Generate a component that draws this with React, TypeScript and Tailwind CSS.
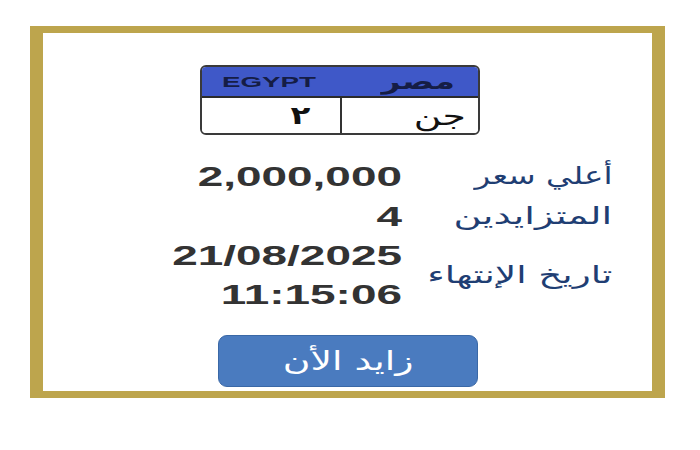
import React from "react";

const latin = { fontFamily: '"Liberation Sans", Arial, sans-serif' };
const arabic = { fontFamily: '"DejaVu Sans", "Noto Sans", sans-serif' };

function Plate() {
  return (
    <div className="ml-[157px] flex h-[70px] w-[280px] shrink-0 flex-col overflow-hidden rounded-[6px] border-2 border-[#3a3a3a]">
      <div className="flex h-[31px] shrink-0 items-center justify-between border-b-2 border-[#2b2b2b] bg-[#3f58c8] pl-[20px] pr-[23px]">
        <span style={latin} className="block origin-left scale-x-[1.85] text-[15px] font-bold leading-[15px] text-[#151d45]">
          EGYPT
        </span>
        <span dir="rtl" style={arabic} className="block origin-right scale-x-[1.5] text-[22px] font-bold leading-[22px] text-[#151d45]">
          مصر
        </span>
      </div>
      <div className="flex flex-1 bg-white">
        <div className="flex w-[140px] items-center justify-end border-r-2 border-[#333] pr-[30px]">
          <span style={arabic} className="block origin-right scale-x-[1.3] text-[25px] font-bold leading-[25px] text-[#111]">
            ٢
          </span>
        </div>
        <div className="flex flex-1 items-center justify-end pr-[12px]">
          <span dir="rtl" style={arabic} className="block origin-right scale-x-[1.45] text-[26px] leading-[26px] text-[#111]">
            جن
          </span>
        </div>
      </div>
    </div>
  );
}

function Label({ children, tall, scale }: { children: React.ReactNode; tall?: boolean; scale: string }) {
  return (
    <div className={`flex items-center ${tall ? "h-[78px]" : "h-[40px]"}`}>
      <span style={arabic} className={`block origin-right text-[24px] leading-[30px] text-[#1f3e73] ${scale}`}>
        {children}
      </span>
    </div>
  );
}

function Value({ lines }: { lines: string[] }) {
  return (
    <div
      dir="ltr"
      style={latin}
      className="origin-right scale-x-[1.64] text-right text-[28px] font-bold leading-[39px] text-[#333]"
    >
      {lines.map((l) => (
        <div key={l}>{l}</div>
      ))}
    </div>
  );
}

export default function App() {
  return (
    <div className="h-[450px] w-[700px] bg-white pl-[30px] pt-[26px]">
      <div className="flex h-[372px] w-[635px] flex-col border-x-[13px] border-y-[7px] border-[#bda54d] bg-white pt-[32px]">
        <Plate />

        <div dir="rtl" className="mt-[21px] grid shrink-0 grid-cols-[192px_auto] items-center gap-x-[18px] pr-[40px]">
          <Label scale="scale-x-[1.36]">أعلي سعر</Label>
          <Value lines={["2,000,000"]} />
          <Label scale="scale-x-[1.6]">المتزايدين</Label>
          <Value lines={["4"]} />
          <Label tall scale="scale-x-[1.55]">تاريخ الإنتهاء</Label>
          <Value lines={["21/08/2025", "11:15:06"]} />
        </div>

        <button
          type="button"
          className="ml-[175px] mt-[21px] flex h-[52px] w-[260px] shrink-0 items-center justify-center rounded-[9px] border border-[#3a68a6] bg-[#4a7bbf]"
          dir="rtl"
        >
          <span style={arabic} className="block scale-x-[1.45] text-[26px] leading-[30px] text-white">
            زايد الأن
          </span>
        </button>
      </div>
    </div>
  );
}
